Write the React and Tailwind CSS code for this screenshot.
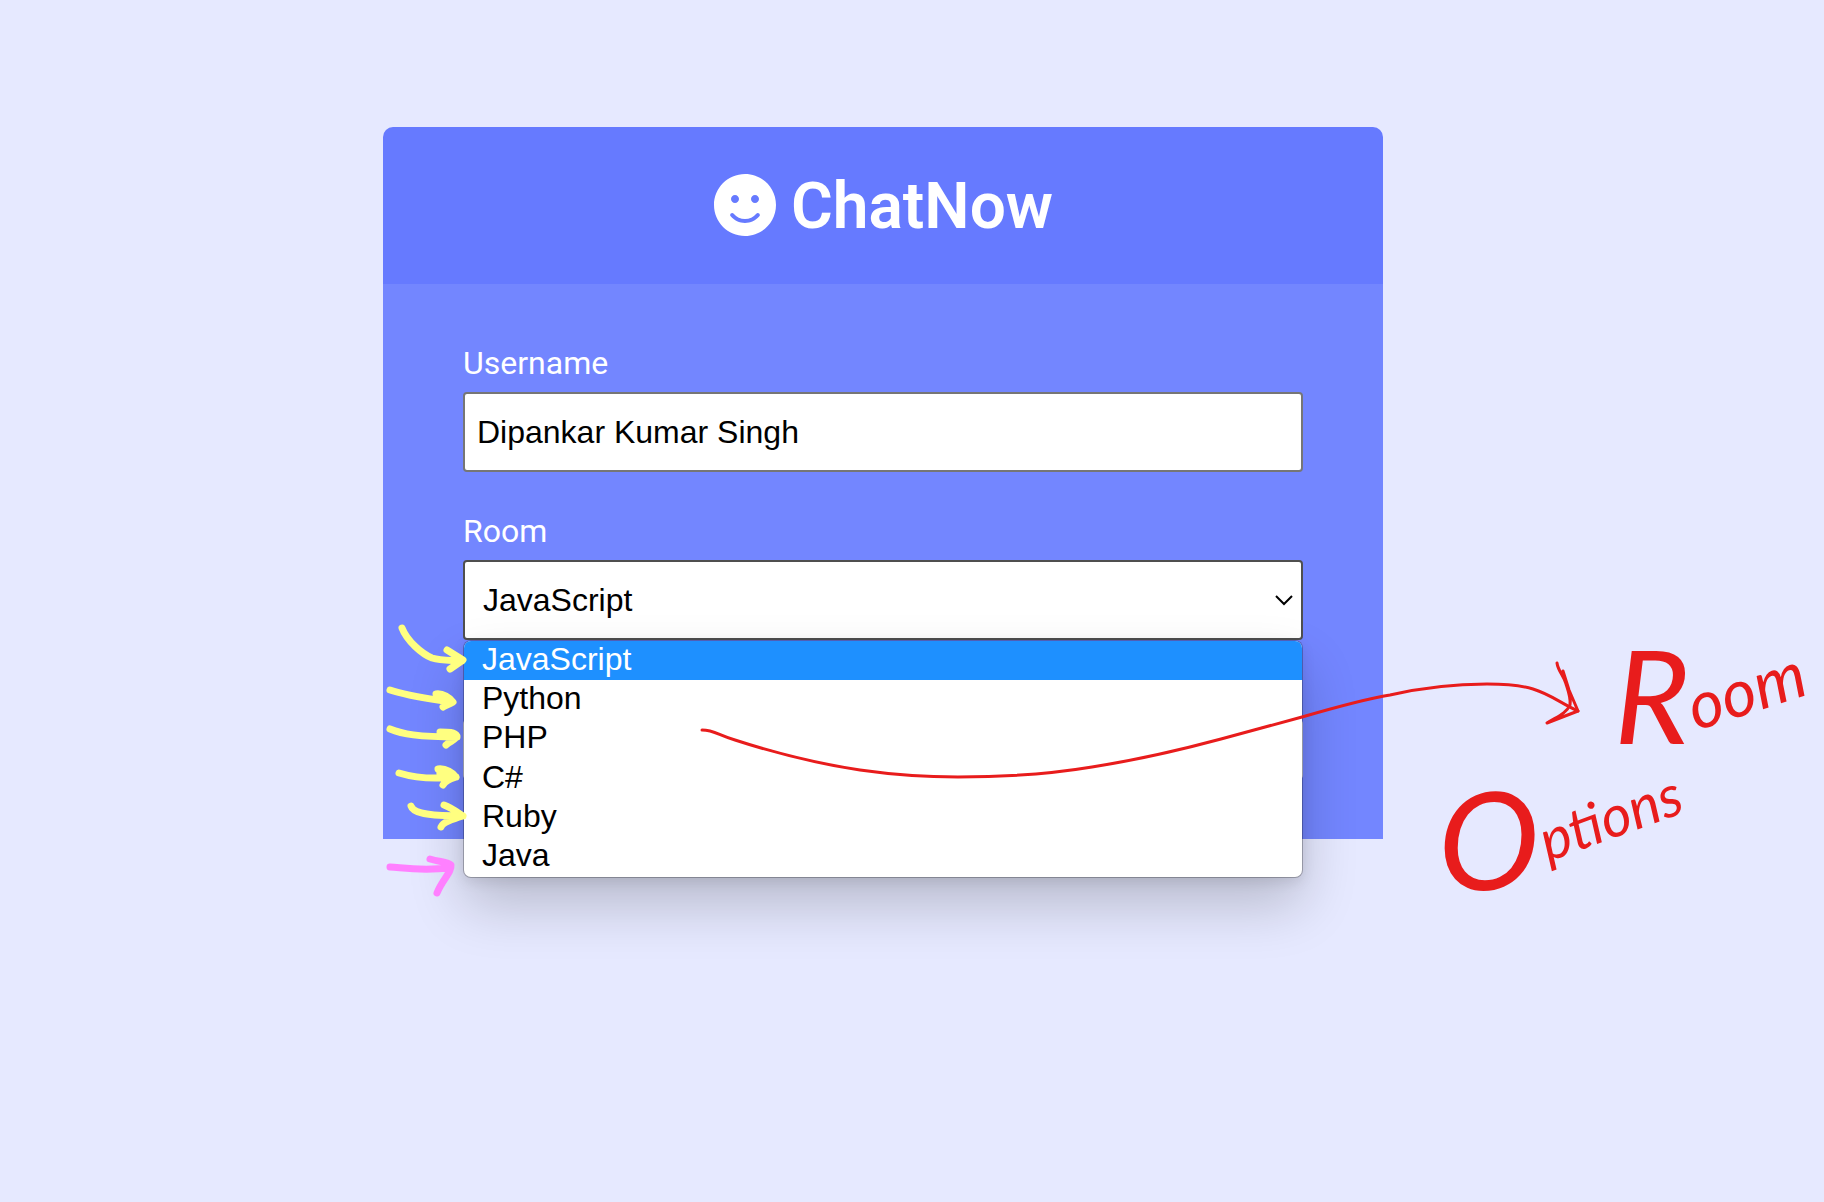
import React from "react";
import { FaSmile } from "react-icons/fa";

const rooms = ["JavaScript", "Python", "PHP", "C#", "Ruby", "Java"];

const yellowArrows = [
  "M402 628C407 641 422 654 432 658C442 661 452 660 462 661M447 650L463 660L450 669",
  "M390 690C402 694 418 697 438 700L451 702M436 694C443 693 450 698 453 702C450 704 447 705 443 707",
  "M390 729C402 734 418 737 457 737M440 732C448 732 455 732 457 736C456 740 450 741 446 745",
  "M399 773C412 777 428 780 456 777M438 769C446 768 453 773 456 777C450 779 446 780 443 785M440 773L450 777",
  "M411 806C413 813 426 816 463 816M444 805C452 808 457 812 463 816C453 819 443 822 441 827",
];

function Annotations() {
  return (
    <svg
      viewBox="383 127 1000 712"
      className="pointer-events-none absolute top-0 left-0 z-20 h-[712px] w-[1000px] overflow-visible"
      fill="none"
      strokeLinecap="round"
      strokeLinejoin="round"
    >
      <g stroke="#ffff80" strokeWidth="7">
        {yellowArrows.map((d) => (
          <path key={d} d={d} />
        ))}
      </g>
      <path
        stroke="#ff80ff"
        strokeWidth="7"
        d="M390 867C405 868 420 871 450 868M430 859C440 862 448 862 451 865C452 872 442 880 437 893"
      />
      <g stroke="#e81c1c" strokeWidth="3">
        <path d="M702 730C714 730 718 735 735 740C775 753 820 764 860 770C895 775 925 777 958 777C1005 777 1050 774 1092 767C1137 760 1180 750 1221 739L1302 717C1340 706 1365 699 1390 695C1425 687 1455 684 1487 684C1505 684 1520 685 1533 689C1550 694 1562 704 1578 711" />
        <path d="M1557 663C1558 671 1564 676 1566 684C1569 693 1571 698 1570 705C1566 714 1556 717 1547 723M1563 671L1569 690L1578 711L1547 723" />
      </g>
      <g fill="#e81c1c" fontFamily="Lato, sans-serif" fontStyle="italic">
        <text x="1614" y="744" fontSize="130">R</text>
        <text fontSize="66" transform="translate(1696 731) rotate(-18)">oom</text>
        <text x="1438" y="890" fontSize="136">O</text>
        <text fontSize="58" transform="translate(1548 862) rotate(-20)">ptions</text>
      </g>
    </svg>
  );
}

export default function App() {
  return (
    <div className="min-h-screen overflow-hidden bg-[#e6e9ff] pt-[127px] pr-[58px] font-['Roboto',sans-serif] text-[32px] leading-[38px] text-white">
      <main className="relative mx-auto max-w-[1000px]">
        <header className="flex items-center justify-center gap-[14px] rounded-t-[10px] bg-[#667aff] pt-[41px] pb-[39px]">
          <FaSmile className="mb-1 size-16" />
          <h1 className="text-[64px] leading-[77px] font-semibold">ChatNow</h1>
        </header>
        <form className="bg-[#7386ff] px-20 py-[60px]">
          <div className="mb-10">
            <label htmlFor="username" className="mb-[10px] block">Username</label>
            <input
              id="username"
              type="text"
              defaultValue="Dipankar Kumar Singh"
              className="block h-20 w-full rounded-[4px] border-2 border-[#767676] bg-white px-3 font-['Liberation_Sans',sans-serif] text-black"
            />
          </div>
          <div>
            <label htmlFor="room" className="mb-[10px] block">Room</label>
            <div className="relative">
              <select
                id="room"
                className="block h-20 w-full appearance-none rounded-[4px] border-2 border-[#4f4f4f] bg-white px-[18px] font-['Liberation_Sans',sans-serif] text-black"
              >
                {rooms.map((room) => (
                  <option key={room}>{room}</option>
                ))}
              </select>
              <svg
                viewBox="0 0 20 12"
                className="pointer-events-none absolute top-[34px] right-[9px] h-3 w-5"
                fill="none"
                stroke="#000"
                strokeWidth="2"
              >
                <path d="M2 2l8 8 8-8" />
              </svg>
              <ul
                role="listbox"
                aria-label="Room"
                className="absolute inset-x-px top-full z-10 mt-px flex h-[236px] flex-col overflow-hidden rounded-[7px] bg-white font-['Liberation_Sans',sans-serif] leading-[34px] text-black shadow-[0_0_0_1px_rgba(0,0,0,0.25),0_28px_56px_rgba(0,0,0,0.2),0_4px_14px_rgba(0,0,0,0.1)]"
              >
                {rooms.map((room, i) => (
                  <li
                    key={room}
                    role="option"
                    aria-selected={i === 0}
                    className="flex flex-1 items-center px-[18px] pb-1 aria-selected:bg-[#1e90ff] aria-selected:text-white"
                  >
                    {room}
                  </li>
                ))}
              </ul>
            </div>
          </div>
          <button
            type="submit"
            aria-label="Join"
            className="mt-20 block h-[59px] w-full rounded-[4px] bg-[#e6e9ff]"
          />
        </form>
        <Annotations />
      </main>
    </div>
  );
}
